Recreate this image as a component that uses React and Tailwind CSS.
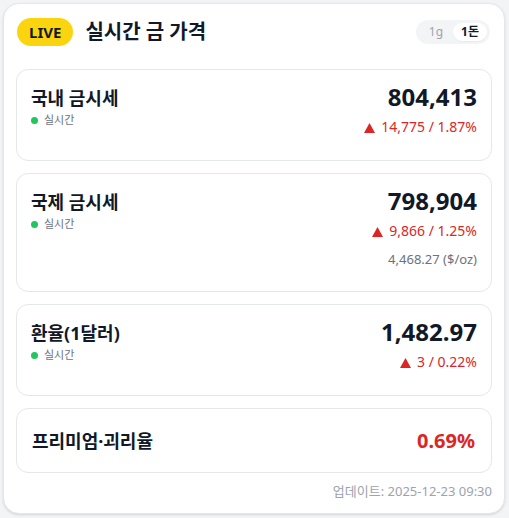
import React from "react";

const FONT = { fontFamily: '"Noto Sans", "Noto Sans CJK KR", sans-serif' };

function Live() {
  return (
    <div className="flex items-center gap-1.5">
      <span className="w-[7px] h-[7px] rounded-full bg-[#22c55e]" />
      <span className="text-[11px] leading-[16px] text-[#6b7280]">실시간</span>
    </div>
  );
}

function Change({ text }) {
  return (
    <div className="flex items-center justify-end gap-1.5 text-[14px] leading-[20px] text-[#dc2626] mt-1.5">
      <svg width="11" height="10" viewBox="0 0 11 10" className="mt-[1px]">
        <polygon points="5.5,0 11,10 0,10" fill="#dc2626" />
      </svg>
      <span>{text}</span>
    </div>
  );
}

function PriceCard({ title, value, change, extra }) {
  return (
    <div className="flex justify-between rounded-xl border border-[#e5e7eb] bg-white pl-[14px] pr-[14px] pt-[13px] pb-[23px]">
      <div className="flex flex-col">
        <div className="text-[18px] leading-[28px] font-bold text-[#111827] mt-[1px]">{title}</div>
        <Live />
      </div>
      <div className="flex flex-col items-end">
        <div className="text-[24px] leading-[28px] font-bold text-[#111827]">{value}</div>
        <Change text={change} />
        {extra && (
          <div className="text-[13px] leading-[18px] text-[#6b7280] mt-[9px]">{extra}</div>
        )}
      </div>
    </div>
  );
}

export default function App() {
  return (
    <div className="w-[509px] h-[518px] bg-[#f3f4f6] pl-[3px] pt-[3px] pr-[4px]" style={FONT}>
      <div className="rounded-2xl border border-[#e5e7eb] bg-white shadow-sm px-3 pt-3 pb-[14px]">
        <div className="flex items-center justify-between h-8">
          <div className="flex items-center">
            <span className="ml-px h-[28px] flex items-center rounded-full bg-[#fad50f] px-[12px] text-[15px] font-bold text-[#111827]">
              LIVE
            </span>
            <span className="ml-[12px] text-[20px] leading-[28px] font-bold text-[#111827]">실시간 금 가격</span>
          </div>
          <div className="flex items-center h-[24px] rounded-full bg-[#f3f4f6] px-[3px] mr-[2px]">
            <span className="h-[18px] flex items-center px-[10px] text-[12px] text-[#9ca3af]">1g</span>
            <span className="h-[18px] flex items-center px-[8px] rounded-full bg-white text-[12px] font-bold text-[#111827] shadow-[0_1px_1px_rgba(0,0,0,0.04)]">1돈</span>
          </div>
        </div>

        <div className="mt-[21px] flex flex-col gap-3">
          <PriceCard title="국내 금시세" value="804,413" change="14,775 / 1.87%" />
          <PriceCard title="국제 금시세" value="798,904" change="9,866 / 1.25%" extra="4,468.27 ($/oz)" />
          <PriceCard title="환율(1달러)" value="1,482.97" change="3 / 0.22%" />
          <div className="flex items-center justify-between rounded-xl border border-[#e5e7eb] bg-white h-[65px] pl-[15px] pr-[16px]">
            <div className="text-[18px] leading-[28px] font-bold text-[#111827]">프리미엄·괴리율</div>
            <div className="text-[20px] leading-[28px] font-bold text-[#dc2626]">0.69%</div>
          </div>
        </div>

        <div className="mt-[10px] text-right text-[13px] leading-[16px] text-[#9ca3af]">업데이트: 2025-12-23 09:30</div>
      </div>
    </div>
  );
}
